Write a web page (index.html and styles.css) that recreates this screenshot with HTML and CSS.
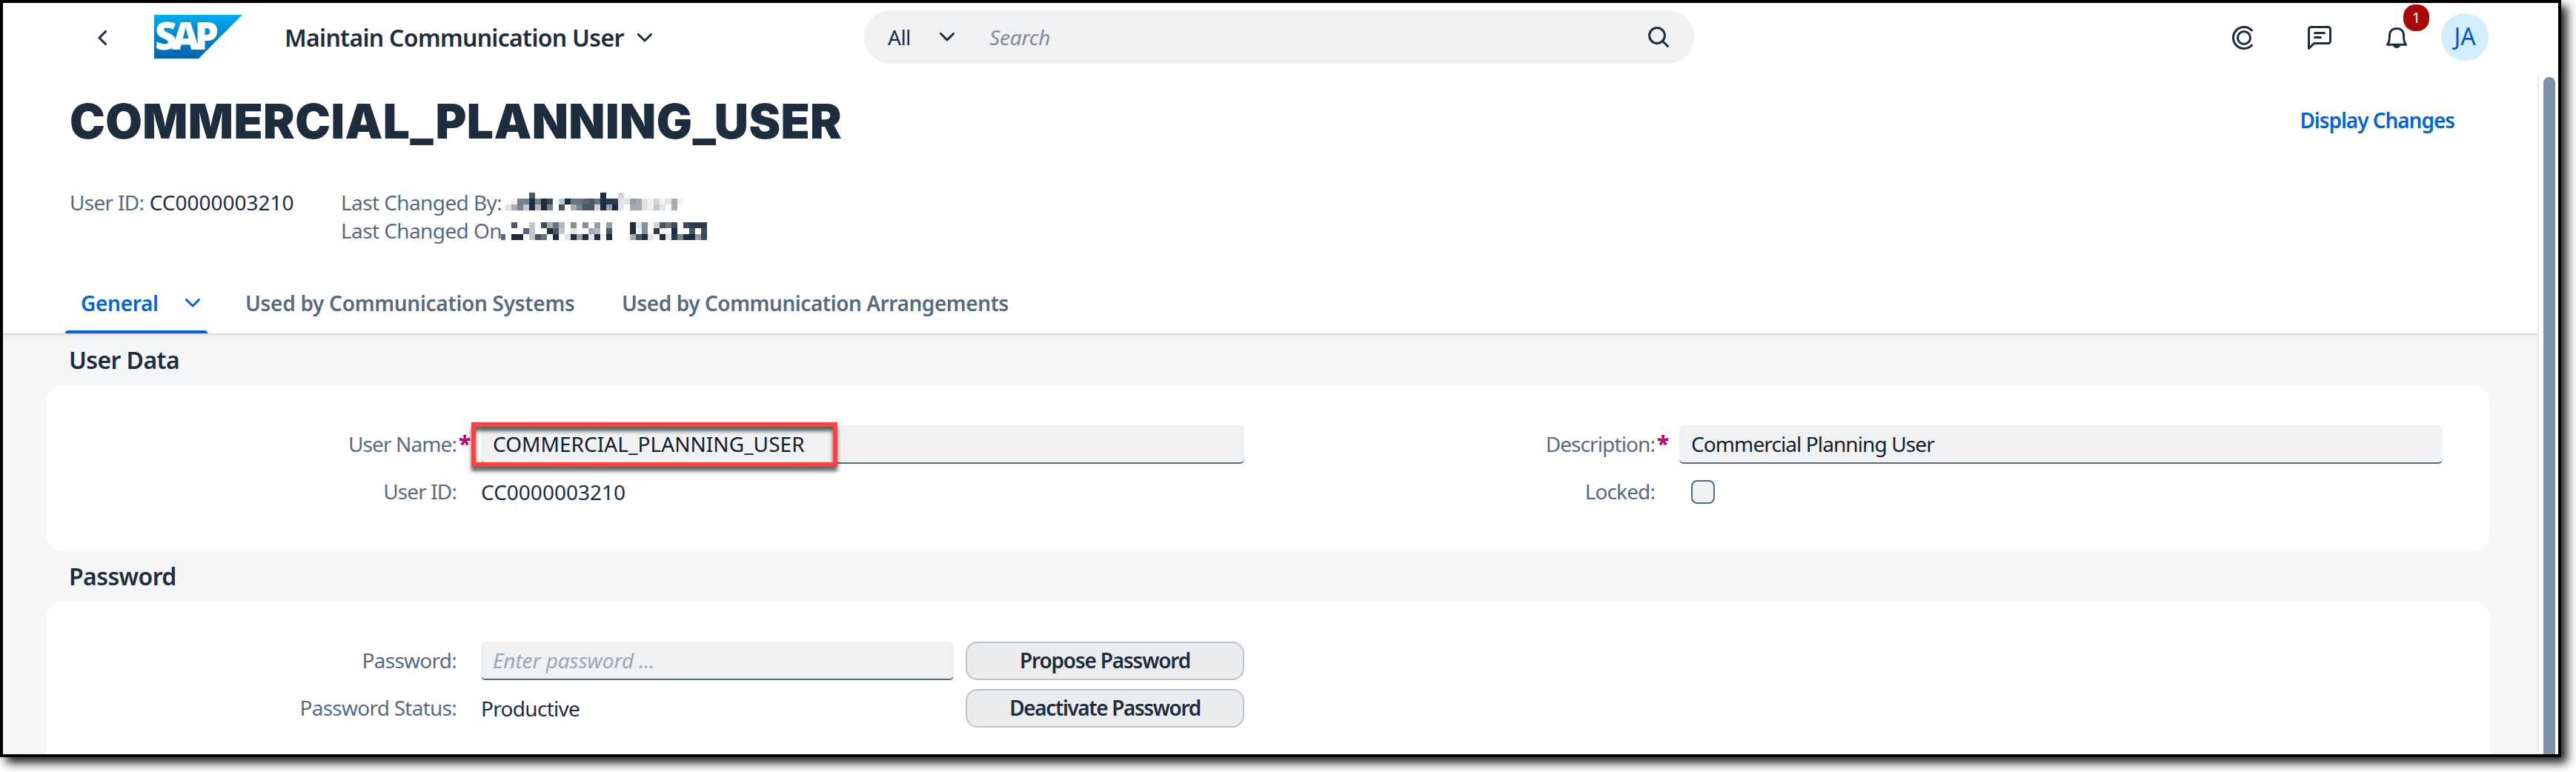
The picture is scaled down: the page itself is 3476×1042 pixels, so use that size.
FILE: index.html
```html
<!DOCTYPE html>
<html lang="en">
<head>
<meta charset="utf-8">
<title>Maintain Communication User</title>
<link rel="stylesheet" href="styles.css">
</head>
<body>
<div class="window">
  <header class="shell">
    <div class="shell-left">
      <svg class="back" width="12" height="20" viewBox="0 0 12 20"><path d="M10.500 1.500 2 10l8.500 8.500"/></svg>
      <svg class="logo" width="119" height="59" viewBox="0 0 119 59">
        <defs><linearGradient id="sap" x1="0" y1="0" x2="0" y2="1"><stop offset="0" stop-color="#00aeef"/><stop offset=".45" stop-color="#0088cf"/><stop offset="1" stop-color="#0063b1"/></linearGradient></defs>
        <path d="M0 0h119L60 59H0z" fill="url(#sap)"/>
        <text x="1" y="47" textLength="86" lengthAdjust="spacing">SAP</text>
      </svg>
      <span class="app-title">Maintain Communication User</span>
      <svg class="chevron" width="20" height="12" viewBox="0 0 20 12"><path d="m1.500 1.500 8.500 8.500 8.500-8.500"/></svg>
    </div>
    <div class="search">
      <span class="scope">All</span>
      <svg class="chevron" width="20" height="12" viewBox="0 0 20 12"><path d="m1.500 1.500 8.500 8.500 8.500-8.500"/></svg>
      <span class="search-hint">Search</span>
      <svg class="icon" width="28" height="28" viewBox="0 0 28 28"><circle cx="12" cy="12" r="10.400"/><path d="m19.500 19.500 7 7"/></svg>
    </div>
    <div class="shell-right">
      <svg class="icon" width="32" height="32" viewBox="0 0 32 32"><circle cx="16" cy="16" r="8.500"/><path d="M26.500 6A14.500 14.500 0 1 0 26.500 26"/></svg>
      <svg class="icon chat" width="32" height="32" viewBox="0 0 32 32"><path d="M1.500 30.500V4.500a3 3 0 0 1 3-3h23a3 3 0 0 1 3 3v16a3 3 0 0 1-3 3H8.500zM9.500 9.500h13M9.500 15.500h8"/></svg>
      <div class="bell">
        <svg class="icon" width="32" height="32" viewBox="0 0 32 32"><path d="M3.500 25.200h25c-2.500-3-3-5.500-3-12.200 0-6-3.500-9.500-9.500-9.500S6.500 7 6.500 13c0 6.700-.5 9.200-3 12.200z"/><path class="solid" d="M11 26h10c-.5 2.500-2.500 4-5 4s-4.500-1.500-5-4z"/></svg>
        <span class="badge">1</span>
      </div>
      <span class="avatar">JA</span>
    </div>
  </header>
  <div class="body">
    <main class="page">
      <div class="object-header">
        <div class="title-row">
          <h1>COMMERCIAL_PLANNING_USER</h1>
          <a class="link">Display Changes</a>
        </div>
        <div class="facts">
          <div class="fact fact-id"><span class="label">User ID:</span> <span class="id">CC0000003210</span></div>
          <div class="fact fact-change"><div class="label">Last Changed By:</div><div class="label">Last Changed On</div></div>
          <svg class="redacted" width="280" height="64" viewBox="0 0 280 64" shape-rendering="crispEdges"></svg>
        </div>
        <nav class="tabs">
          <a class="tab active">General<svg class="chevron" width="20" height="12" viewBox="0 0 20 12"><path d="m1.500 1.500 8.500 8.500 8.500-8.500"/></svg></a>
          <a class="tab tab-systems">Used by Communication Systems</a>
          <a class="tab tab-arrangements">Used by Communication Arrangements</a>
        </nav>
      </div>
      <section>
        <h2>User Data</h2>
        <div class="card card-user">
          <span class="label">User Name:</span><span class="required">*</span>
          <div class="field"><span class="upper">COMMERCIAL_PLANNING_USER</span><span class="marker"></span></div>
          <span class="label">Description:</span><span class="required">*</span>
          <div class="field">Commercial Planning User</div>
          <span class="label">User ID:</span><span></span>
          <span class="value id">CC0000003210</span>
          <span class="label">Locked:</span><span></span>
          <span class="checkbox"></span>
        </div>
      </section>
      <section class="last">
        <h2>Password</h2>
        <div class="card card-password">
          <span class="label">Password:</span><span></span>
          <div class="field hint">Enter password ...</div>
          <button class="button">Propose Password</button>
          <span class="label">Password Status:</span><span></span>
          <span class="value">Productive</span>
          <button class="button wide">Deactivate Password</button>
        </div>
      </section>
    </main>
    <div class="rail"><div class="thumb"></div></div>
  </div>
</div>
<script src="redact.js"></script>
</body>
</html>
```
FILE: redact.js
```js
// Each character is one 8px block: 0 is the text colour, f is white, a dot is empty.
const lines = [
  [0, '....3...........0..c'],
  [8, '.e660602.b055435011dd89deced9e'],
  [16, 'd96b0a06.3.9633c080d.99debd.9'],
  [40, '.3..b.295a.7.7.8.8...0d7.c352.2111'],
  [48, '...4b..03b.d..9a.3...0e7.1e.0..3.2'],
  [56, '.00.b35.0.d080d0e0...930d.0d160082']
];
const svg = document.querySelector('.redacted');
function block(x, y, width, height, fill) {
  const r = document.createElementNS('http://www.w3.org/2000/svg', 'rect');
  Object.entries({ x, y, width, height, fill }).forEach(([k, v]) => r.setAttribute(k, v));
  svg.append(r);
}
for (const [y, cells] of lines) {
  [...cells].forEach((c, i) => {
    if (c === '.') return;
    const t = parseInt(c, 16) / 15;
    const rgb = [29, 45, 62].map(v => Math.round(v + (255 - v) * t));
    block(6 + i * 8, y, 8, 8, `rgb(${rgb})`);
  });
}
block(0, 56, 6, 8, '#556b82');
```
FILE: styles.css
```css
* { box-sizing: border-box; }
body {
  margin: 0;
  height: 1042px;
  overflow: hidden;
  background: #fff;
  color: #1d2d3e;
  font: 28px/38px "Noto Sans", sans-serif;
}
svg { display: block; flex: none; }
.window {
  display: flex;
  flex-direction: column;
  width: 3456px;
  height: 1022px;
  border: 4px solid #000;
  background: #fff;
  box-shadow: 8px 8px 12px rgba(0, 0, 0, .85);
}
.back, .chevron, .icon {
  fill: none;
  stroke: currentColor;
  stroke-width: 3;
  stroke-linecap: round;
  stroke-linejoin: round;
}
.solid { fill: currentColor; stroke: none; }

/* Shell bar */
.shell { display: flex; align-items: center; flex: none; height: 92px; }
.shell-left { display: flex; align-items: center; width: 1162px; padding: 2px 0 0 128px; }
.logo { margin-left: 64px; margin-top: -3px; overflow: visible; }
.logo text { font: 900 51px "Noto Sans", sans-serif; fill: #fff; }
.app-title { margin: 0 18px 0 57px; font-size: 32px; font-weight: 600; letter-spacing: -.7px; white-space: nowrap; }
.search {
  display: flex;
  align-items: center;
  width: 1120px;
  height: 72px;
  padding: 0 34px 0 32px;
  border-radius: 36px;
  background: #eff1f2;
}
.scope { width: 70px; letter-spacing: -.5px; }
.search-hint { flex: 1; margin-left: 47px; font-style: italic; color: #838c96; letter-spacing: -.2px; }
.shell-right { display: flex; align-items: center; flex: 1; justify-content: flex-end; padding-right: 94px; }
.shell-right .icon { position: relative; top: 1px; }
.chat { margin: 0 72px 0 70px; }
.bell { position: relative; }
.badge {
  position: absolute;
  left: 25px;
  top: -28px;
  width: 35px;
  height: 36px;
  border-radius: 16px;
  background: #aa0808;
  color: #fff;
  font-size: 20px;
  line-height: 35px;
  text-align: center;
}
.avatar {
  width: 64px;
  height: 64px;
  margin-left: 44px;
  border-radius: 50%;
  background: #d1efff;
  color: #0057d2;
  font-size: 32px;
  line-height: 62px;
  text-align: center;
}

/* Page */
.body { display: flex; flex: 1; min-height: 0; }
.page { display: flex; flex-direction: column; width: 3420px; background: #f5f6f7; }
.object-header { padding: 28px 112px 0 90px; background: #fff; border-bottom: 2px solid #d9d9d9; }
.title-row { display: flex; align-items: center; justify-content: space-between; height: 80px; }
h1 { margin: 0; font: 900 64px/80px Inter, "Noto Sans", sans-serif; letter-spacing: .4px; }
.link { color: #0064d9; font-weight: 600; letter-spacing: -1.050px; padding-bottom: 5px; }
.facts { display: flex; align-items: flex-start; margin-top: 50px; height: 76px; white-space: nowrap; }
.label { color: #556b82; letter-spacing: -.7px; }
.fact-id { width: 366px; }
.id { letter-spacing: 0; }
.fact-change { width: 216px; }
.fact-change .label { letter-spacing: -.6px; }
.fact-id .label { letter-spacing: -.7px; }
.redacted { margin-top: 6px; }
.tabs { display: flex; margin: 38px 0 0 -6px; height: 82px; font-weight: 600; line-height: 82px; letter-spacing: -.3px; color: #556b82; }
.tab { display: flex; align-items: center; white-space: nowrap; }
.active { position: relative; width: 192px; padding-left: 21px; color: #0064d9; }
.active::after { content: ""; position: absolute; left: 0; right: 0; bottom: 0; height: 4px; border-radius: 4px 4px 0 0; background: #0064d9; }
.active .chevron { margin-left: 36px; }
.tab-systems { width: 508px; padding-left: 51px; }
.tab-arrangements { padding-left: 51px; letter-spacing: -.45px; }

h2 { margin: 0; padding-left: 89px; font-size: 32px; font-weight: 600; line-height: 68px; letter-spacing: -.6px; }
section:first-of-type { background: linear-gradient(#eeeff1, #f5f6f7 14px); }
.card {
  display: grid;
  grid-auto-rows: 52px;
  row-gap: 12px;
  align-items: center;
  align-content: start;
  width: 3298px;
  height: 224px;
  margin-left: 58px;
  padding-top: 54px;
  border-radius: 24px;
  background: #fff;
}
.card-user { grid-template-columns: 555px 32px 1030px 555px 32px 1030px; }
.card-password { grid-template-columns: 555px 32px 638px 392px; }
.last { display: flex; flex-direction: column; flex: 1; }
.last .card { flex: 1; border-radius: 24px 24px 0 0; }
.card .label { padding: 0 1px 3px 0; text-align: right; letter-spacing: -.9px; }
.card-password .label { letter-spacing: -.75px; }
.required { padding: 0 0 2px 2px; color: #ba066c; font-size: 30px; font-weight: 800; }
.field {
  position: relative;
  height: 52px;
  padding-left: 16px;
  border-bottom: 2px solid #556b82;
  border-radius: 6px;
  background: #eff1f2;
  color: #131e29;
  line-height: 50px;
  letter-spacing: -.9px;
}
.upper { letter-spacing: .05px; }
.hint { color: #9aa7b5; font-style: italic; letter-spacing: -.1px; }
.marker {
  position: absolute;
  left: -13px;
  top: -4px;
  width: 494px;
  height: 60px;
  border: 6px solid #ff4141;
  box-shadow: 0 6px 5px rgba(0, 0, 0, .6), inset 0 6px 5px rgba(0, 0, 0, .6);
}
.value { letter-spacing: -.7px; }
.value.id { letter-spacing: 0; }
.checkbox { width: 32px; height: 32px; margin-left: 16px; border: 2px solid #556b82; border-radius: 8px; background: #eff1f2; }
.button {
  height: 52px;
  margin-left: 16px;
  padding: 0 0 2px;
  border: 2px solid #bcc3ca;
  border-radius: 16px;
  background: #eaecee;
  color: #1d2d3e;
  font: 600 28px/44px "Noto Sans", sans-serif;
  letter-spacing: -1.200px;
}
.wide { letter-spacing: -1.400px; }

/* Scroll bar */
.rail { width: 28px; margin-top: 6px; padding: 2px 4px 0 6px; border-left: 2px solid #ebebeb; }
.thumb { width: 16px; height: 100%; border-radius: 8px 8px 0 0; background: #7b91a8; }
```
